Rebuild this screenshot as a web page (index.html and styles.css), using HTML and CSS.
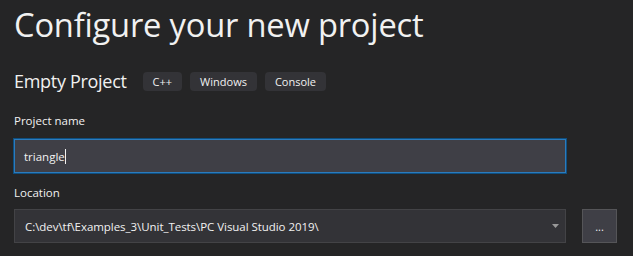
FILE: index.html
```html
<!DOCTYPE html>
<html>
<head>
<meta charset="utf-8">
<link rel="stylesheet" href="styles.css">
</head>
<body>
<div class="page">
  <h1 class="title">Configure your new project</h1>
  <div class="template-row">
    <span class="template-name">Empty Project</span>
    <span class="tag">C++</span>
    <span class="tag">Windows</span>
    <span class="tag">Console</span>
  </div>
  <div class="field-label first">Project name</div>
  <div class="input focused"><span class="value">triangle</span><span class="caret"></span></div>
  <div class="field-label">Location</div>
  <div class="location-row">
    <div class="input combo">
      <span class="value">C:\dev\tf\Examples_3\Unit_Tests\PC Visual Studio 2019\</span>
      <svg class="arrow" width="7" height="4" viewBox="0 0 7 4"><path d="M0 0H7L3.5 4Z" fill="#999"/></svg>
    </div>
    <div class="browse">...</div>
  </div>
</div>
</body>
</html>
```
FILE: styles.css
```css
html, body {
  margin: 0;
  padding: 0;
  background: #252526;
  width: 633px;
  height: 256px;
  overflow: hidden;
}
.page {
  padding: 0 0 0 14px;
  font-family: "Open Sans", "Noto Sans", sans-serif;
  color: #f1f1f1;
}
.title {
  margin: 0;
  padding-top: 3px;
  font-weight: 400;
  font-size: 32.7px;
  line-height: 44px;
  letter-spacing: -0.2px;
  color: #f1f1f1;
}
.template-row {
  display: flex;
  align-items: center;
  margin-top: 24px;
  height: 20px;
}
.template-name {
  font-size: 18px;
  margin-right: 16px;
  letter-spacing: -0.3px;
}
.tag {
  background: #333337;
  border-radius: 4px;
  height: 19px;
  line-height: 19px;
  font-size: 11px;
  padding: 0 10px;
  margin-right: 8px;
  color: #f1f1f1;
}
.tag:first-of-type {
  padding: 0 11px;
}
.field-label {
  font-size: 11.5px;
  line-height: 16px;
  margin-top: 12px;
  color: #f1f1f1;
}
.field-label.first {
  margin-top: 22px;
}
.input {
  box-sizing: border-box;
  width: 552px;
  height: 34px;
  margin-top: 10px;
  background: #3f3f46;
  border: 1px solid #3f3f46;
  display: flex;
  align-items: center;
  padding-left: 9px;
  font-size: 11.5px;
  color: #f1f1f1;
}
.input.focused {
  border: 1px solid #2b7bbd;
  box-shadow: 0 0 0 1px #0e4f80;
}
.caret {
  display: inline-block;
  width: 1px;
  height: 15px;
  background: #f1f1f1;
}
.location-row {
  display: flex;
  margin-top: 8px;
  gap: 16px;
}
.location-row .input {
  margin-top: 0;
}
.combo {
  background: #333337;
  border: 1px solid #434346;
  padding-left: 10px;
  justify-content: space-between;
  padding-right: 6px;
  letter-spacing: -0.05px;
}
.arrow {
  display: block;
}
.browse {
  box-sizing: border-box;
  width: 35px;
  height: 34px;
  background: #3f3f46;
  border: 1px solid #555558;
  color: #f1f1f1;
  font-size: 11px;
  display: flex;
  align-items: center;
  justify-content: center;
  line-height: 1;
}
```
